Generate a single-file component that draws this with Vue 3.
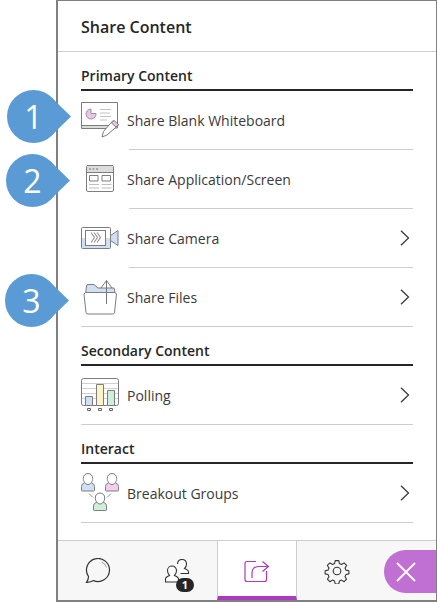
<script setup>
const gray = '#7d7d7d'
</script>

<template>
  <div class="page">
    <div class="panel">
      <header class="title">Share Content</header>
      <main class="content">
        <h2 class="heading">Primary Content</h2>
        <div class="row inset">
          <svg class="icon" width="40" height="40" viewBox="0 0 40 40" fill="none">
            <path d="M.5 3.500H36.500V29H.5Z" fill="#fff" :stroke="gray" />
            <path d="M.5 26.500H33V29.500H.5Z" fill="#dcdcdc" :stroke="gray" />
            <path d="M10 10v4.500h5a5 5 0 1 1-5-4.500Z" fill="#e8c6e6" stroke="#8a7a8a" stroke-width=".8" />
            <path d="M19 10.500h11M19 14h10M19 17.500h11M19 21h7" stroke="#c4c4c4" />
            <path d="M32 21.500l5.500 4.500-11.500 10-5 2 1.500-5.500Z" fill="#fff" :stroke="gray" />
            <path d="M33 21.500l4.500 4-2.500 2.500-4.500-4Z" fill="#e8c6e6" :stroke="gray" />
          </svg>
          <span>Share Blank Whiteboard</span>
        </div>
        <div class="row inset">
          <svg class="icon" width="40" height="40" viewBox="0 0 40 40" fill="none">
            <rect x="5.500" y="7.500" width="27" height="26" rx="1.500" fill="#fff" :stroke="gray" />
            <path d="M6 8h26v6H6Z" fill="#dcdcdc" />
            <path d="M5.500 14.500h27" :stroke="gray" />
            <path d="M8 11h2M11.500 11h2M15 11h2" stroke="#777" />
            <path d="M8.500 17.500h8.500v5.500H8.500ZM21 17.500h8.500v5.500H21Z" :stroke="gray" />
            <path d="M8 26.500h10M20.500 26.500h10M8 30h10M20.500 30h10" stroke="#bdbdbd" />
          </svg>
          <span>Share Application/Screen</span>
        </div>
        <div class="row inset">
          <svg class="icon" width="40" height="40" viewBox="0 0 40 40" fill="none">
            <path d="M1 21h28v10H1Z" fill="#cfe0f4" />
            <rect x=".5" y="10.500" width="29" height="21" rx="1" :stroke="gray" />
            <rect x="4.500" y="13.500" width="20" height="15" fill="#fff" :stroke="gray" />
            <path d="M10 15.500l3.500 5-3.500 5M13 15.500l3.500 5-3.500 5M16 15.500l3.500 5-3.500 5" stroke="#999" stroke-width="1.200" />
            <path d="M29.500 18.500l7.500-5v15l-7.500-5Z" fill="#cfe0f4" :stroke="gray" />
          </svg>
          <span>Share Camera</span>
          <svg class="chev" width="12" height="16" viewBox="0 0 12 16" fill="none"><path d="M2 .8 9.500 8 2 15.200" stroke="#3a3a3a" stroke-width="1.300" /></svg>
        </div>
        <div class="row">
          <svg class="icon" width="40" height="40" viewBox="0 0 40 40" fill="none">
            <path d="M4.500 18 5.500 10Q5.700 8.500 7 8.500H13l4 3.500h16l1.500 6Z" fill="#cfe0f4" :stroke="gray" />
            <path d="M4.500 16.500 3 18l2 18.500q.2 1.500 2 1.500H31.500q1.800 0 2-1.500L35.500 18 34 16.500Z" fill="#fff" :stroke="gray" />
            <path d="M25.500 28V4.500M20 12l5.500-7.500 5.500 7.500" stroke="#777" fill="none" />
          </svg>
          <span>Share Files</span>
          <svg class="chev" width="12" height="16" viewBox="0 0 12 16" fill="none"><path d="M2 .8 9.500 8 2 15.200" stroke="#3a3a3a" stroke-width="1.300" /></svg>
        </div>

        <h2 class="heading">Secondary Content</h2>
        <div class="row">
          <svg class="icon" width="40" height="40" viewBox="0 0 40 40" fill="none">
            <rect x=".500" y="4.500" width="37" height="27" rx="2" fill="#fff" :stroke="gray" />
            <path d="M1 9.500h36M1 14.500h36M1 19.500h36M1 24.500h36" stroke="#d0d0d0" />
            <path d="M4.500 22.500h7v9h-7Z" fill="#cfe0f4" :stroke="gray" />
            <path d="M15.500 10.500h7v21h-7Z" fill="#fdf3c9" :stroke="gray" />
            <path d="M26.500 16.500h7v15h-7Z" fill="#cff0d8" :stroke="gray" />
            <path d="M6.500 34.500h3v2h-3ZM17.500 34.500h3v2h-3ZM28.500 34.500h3v2h-3Z" stroke="#666" />
          </svg>
          <span>Polling</span>
          <svg class="chev" width="12" height="16" viewBox="0 0 12 16" fill="none"><path d="M2 .8 9.500 8 2 15.200" stroke="#3a3a3a" stroke-width="1.300" /></svg>
        </div>

        <h2 class="heading">Interact</h2>
        <div class="row">
          <svg class="icon" width="40" height="40" viewBox="0 0 40 40" fill="none">
            <g>
              <path d="M.5 18.500v-4q0-2.500 2.500-3.500l2-1h4l2 1q2.500 1 2.500 3.500v4q0 .5-1 .5h-11q-1 0-1-.5Z" fill="#cfe0f4" :stroke="gray" />
              <path d="M7 1.500c-3 0-4.700 2.200-4.700 5s2 6 4.700 6 4.700-3.200 4.700-6-1.700-5-4.700-5Z" fill="#fff" :stroke="gray" />
            </g>
            <g transform="translate(24 0)">
              <path d="M.5 18.500v-4q0-2.500 2.500-3.500l2-1h4l2 1q2.500 1 2.500 3.500v4q0 .5-1 .5h-11q-1 0-1-.5Z" fill="#f3cdee" :stroke="gray" />
              <path d="M7 1.500c-3 0-4.700 2.200-4.700 5s2 6 4.700 6 4.700-3.200 4.700-6-1.700-5-4.700-5Z" fill="#fff" :stroke="gray" />
            </g>
            <g transform="translate(12 19.500)">
              <path d="M.5 18.500v-4q0-2.500 2.500-3.500l2-1h4l2 1q2.500 1 2.500 3.500v4q0 .5-1 .5h-11q-1 0-1-.5Z" fill="#cff0d8" :stroke="gray" />
              <path d="M7 1.500c-3 0-4.700 2.200-4.700 5s2 6 4.700 6 4.700-3.200 4.700-6-1.700-5-4.700-5Z" fill="#fff" :stroke="gray" />
            </g>
            <path d="M8 21.500l4 4M30 21.500l-4 4" stroke="#999" />
          </svg>
          <span>Breakout Groups</span>
          <svg class="chev" width="12" height="16" viewBox="0 0 12 16" fill="none"><path d="M2 .8 9.500 8 2 15.200" stroke="#3a3a3a" stroke-width="1.300" /></svg>
        </div>
      </main>

      <nav class="tabs">
        <div class="tab">
          <svg width="26" height="26" viewBox="0 0 26 26" fill="none">
            <path d="M1.500 24.300q2-2.500 2-5.800A11.500 11.500 0 1 1 8.500 22.600Q5.500 24.500 1.500 24.300Z" stroke="#333" stroke-width="1.200" />
            <path d="M16.500 4q4 1.500 5 5.500" stroke="#999" />
          </svg>
        </div>
        <div class="tab">
          <div class="people">
            <svg width="26" height="24" viewBox="0 0 26 24" fill="none">
              <path d="M14 7.500q.2-4.500 4.500-4.500t4.500 4.500q0 3-2 4.500l2 1q2 .8 2 2.500v1.500H17" fill="#fff" stroke="#333" stroke-width="1.100" transform="translate(-.5 -2.500)" />
              <path d="M1.500 23v-3q0-1.500 2-2.500l2-1q-2-2-2-5a4.500 4.500 0 0 1 9 0q0 3-2 5l2 1q2 1 2 2.500v3Z" fill="#fff" stroke="#333" stroke-width="1.100" />
            </svg>
            <span class="badge">1</span>
          </div>
        </div>
        <div class="tab active">
          <svg width="26" height="24" viewBox="0 0 26 24" fill="none">
            <path d="M12 2.500H3q-2 0-2 2V20.500q0 2 2 2H20.500q2 0 2-2V12" stroke="#ad39c1" stroke-width="1.200" />
            <path d="M8 19v-5q0-6.500 7-6.500h9.500M18.500 2.500l6 5-6 5" stroke="#ad39c1" stroke-width="1.200" />
          </svg>
        </div>
        <div class="tab">
          <svg width="26" height="26" viewBox="0 0 26 26" fill="none">
            <path d="M11 1.500h4l.7 3.300 2.300 1 2.900-1.800 2.800 2.800-1.800 2.900 1 2.300 3.300.7v3.500l-3.300.8-1 2.300 1.800 2.800-2.800 2.800-2.900-1.800-2.300 1-.7 3.300h-4l-.7-3.300-2.300-1-2.900 1.800-2.800-2.800 1.800-2.800-1-2.300-3.300-.8v-3.500l3.300-.7 1-2.300-1.800-2.900 2.800-2.800 2.900 1.800 2.300-1Z" transform="translate(1.300 1.300) scale(.9)" stroke="#333" stroke-width="1.200" stroke-linejoin="round" />
            <circle cx="13" cy="13" r="3.800" stroke="#333" stroke-width="1.100" />
          </svg>
        </div>
        <button class="close" aria-label="Close">
          <svg width="22" height="22" viewBox="0 0 22 22" fill="none"><path d="M2 2l18 18M20 2 2 20" stroke="#fff" stroke-width="1.800" /></svg>
        </button>
      </nav>
    </div>

    <div class="callout one"><span>1</span></div>
    <div class="callout two"><span>2</span></div>
    <div class="callout three"><span>3</span></div>
  </div>
</template>

<style scoped>
.page {
  position: relative;
  width: 437px;
  height: 603px;
  background: #fff;
  font-family: "Open Sans", sans-serif;
  color: #262626;
  overflow: hidden;
}
.panel {
  box-sizing: border-box;
  margin-left: 56px;
  width: 381px;
  height: 602px;
  border: 1px solid #808080;
  border-left-width: 2px;
  border-bottom-width: 2px;
  display: flex;
  flex-direction: column;
  background: #fff;
}
.title {
  box-sizing: border-box;
  height: 51px;
  padding: 15px 0 0 23px;
  font-size: 16px;
  font-weight: 600;
  line-height: 22px;
  border-bottom: 1px solid #cdcdcd;
}
.content {
  flex: 1;
  padding: 0 23px;
}
.heading {
  margin: 0;
  height: 39px;
  box-sizing: border-box;
  padding-top: 14px;
  font-size: 14px;
  line-height: 20px;
  font-weight: 600;
  border-bottom: 2px solid #262626;
}
.row {
  position: relative;
  box-sizing: border-box;
  height: 59px;
  display: flex;
  align-items: center;
  padding-left: 46px;
  font-size: 14px;
  color: #3a3a3a;
  border-bottom: 1px solid #cdcdcd;
}
.row.inset {
  border-bottom: none;
}
.row.inset::after {
  content: "";
  position: absolute;
  left: 48px;
  right: 0;
  bottom: 0;
  height: 1px;
  background: #cdcdcd;
}
.icon {
  position: absolute;
  left: 0;
  top: 8px;
}
.chev {
  position: absolute;
  right: 2px;
  top: 21px;
}
.tabs {
  position: relative;
  box-sizing: border-box;
  height: 60px;
  display: grid;
  grid-template-columns: 79px 80px 80px 1fr;
  background: #f7f7f7;
  border-top: 1px solid #cdcdcd;
}
.tab {
  display: flex;
  align-items: center;
  justify-content: center;
}
.tab:last-of-type {
  justify-content: flex-start;
  padding-left: 27px;
}
.tab.active {
  background: #fff;
  border-left: 1px solid #cdcdcd;
  border-right: 1px solid #cdcdcd;
  border-bottom: 4px solid #ad39c1;
  box-sizing: border-box;
  padding-top: 4px;
}
.people {
  position: relative;
  display: flex;
}
.badge {
  position: absolute;
  left: 12px;
  top: 19px;
  width: 18px;
  height: 14px;
  border-radius: 7px;
  background: #262626;
  color: #fff;
  font-size: 11px;
  font-weight: 700;
  line-height: 14px;
  text-align: center;
}
.close {
  position: absolute;
  right: 0;
  top: 9px;
  width: 52px;
  height: 43px;
  padding: 0 0 0 11px;
  border: none;
  border-radius: 22px 0 0 22px;
  background: #c06fd2;
  display: flex;
  align-items: center;
}
.callout {
  position: absolute;
  width: 53px;
  height: 53px;
  border-radius: 50%;
  background: #5b9bd5;
  color: #fff;
  font-size: 32px;
  line-height: 53px;
  text-align: center;
}
.callout::after {
  content: "";
  position: absolute;
  left: 45px;
  top: 8px;
  width: 19px;
  height: 37px;
  background: #5b9bd5;
  clip-path: polygon(0 0, 100% 50%, 0 100%);
}
.callout span {
  position: relative;
  z-index: 1;
}
.one { left: 7px; top: 90px; }
.two { left: 6px; top: 154px; }
.three { left: 5px; top: 274px; }
</style>
